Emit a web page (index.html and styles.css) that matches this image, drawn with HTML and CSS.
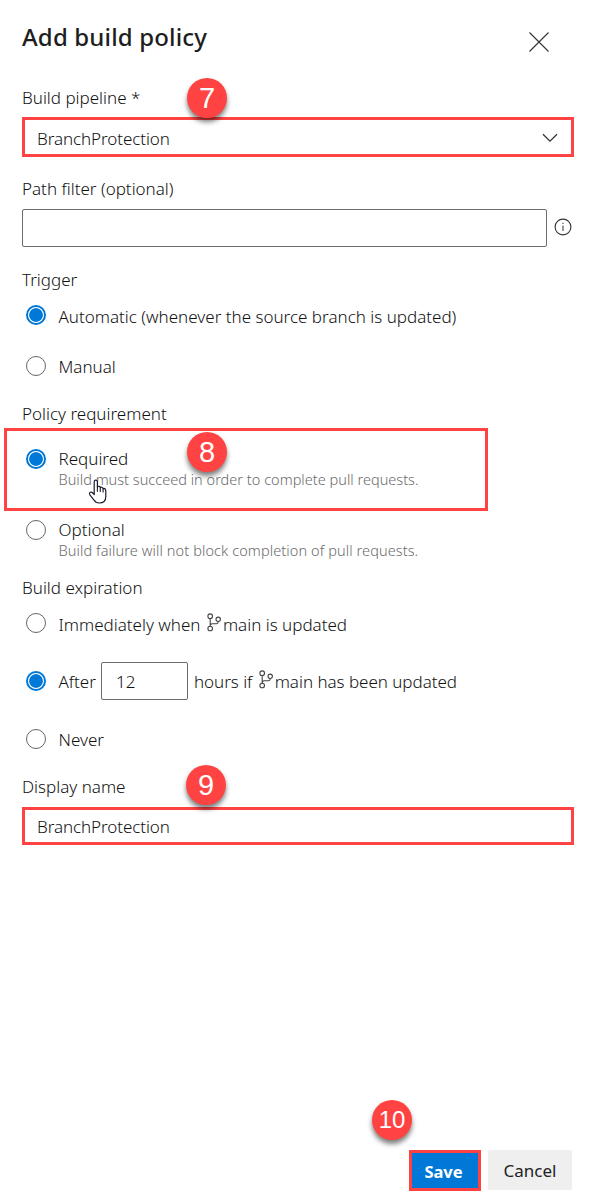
FILE: index.html
```html
<!DOCTYPE html>
<html lang="en">
<head>
  <meta charset="UTF-8" />
  <meta name="viewport" content="width=device-width, initial-scale=1.0" />
  <title>Add build policy</title>
  <link rel="stylesheet" href="styles.css">
</head>
<body>
  <svg width="0" height="0" class="defs">
    <symbol id="branch" viewBox="0 0 14 19">
      <g fill="none" stroke="#444" stroke-width="1.1">
        <circle cx="3.2" cy="3.2" r="2.3" />
        <circle cx="3.2" cy="15.5" r="2.3" />
        <circle cx="11.2" cy="6.3" r="2.2" />
        <path d="M3.2 5.5v7.7M11.2 8.5v.6q0 1.6-1.6 1.6H5.3q-2.1 0-2.1 2.2" />
      </g>
    </symbol>
  </svg>

  <form class="panel">
    <header class="header">
      <h1>Add build policy</h1>
      <button type="button" class="close" aria-label="Close">
        <svg width="22" height="22" viewBox="0 0 22 22"><path d="M1.5 1.5l19 19M20.5 1.5l-19 19" fill="none" stroke="#333" stroke-width="1.1" /></svg>
      </button>
    </header>

    <section class="field pipeline">
      <label class="label">Build pipeline *</label>
      <span class="badge">7</span>
      <div class="dropdown highlight">
        <span>BranchProtection</span>
        <svg width="16" height="10" viewBox="0 0 16 10"><path d="M1 1.2l7 7 7-7" fill="none" stroke="#333" stroke-width="1.3" /></svg>
      </div>
    </section>

    <section class="field path">
      <label class="label" for="path">Path filter (optional)</label>
      <div class="path-row">
        <input type="text" id="path" class="text-input" />
        <svg width="18" height="18" viewBox="0 0 18 18">
          <circle cx="9" cy="9" r="7.9" fill="none" stroke="#333" stroke-width="1.1" />
          <path d="M9 7.6v5.4M9 4.7v1.4" stroke="#555" stroke-width="1.2" />
        </svg>
      </div>
    </section>

    <section class="field trigger">
      <div class="label">Trigger</div>
      <label class="option automatic">
        <input type="radio" name="trigger" checked />
        <span class="text">Automatic (whenever the source branch is updated)</span>
      </label>
      <label class="option manual">
        <input type="radio" name="trigger" />
        <span class="text">Manual</span>
      </label>
    </section>

    <section class="field requirement">
      <div class="label">Policy requirement</div>
      <div class="required-box highlight">
        <label class="option">
          <input type="radio" name="requirement" checked />
          <span class="text">Required<small>Build must succeed in order to complete pull requests.</small></span>
        </label>
        <span class="badge">8</span>
        <svg class="cursor" width="20" height="26" viewBox="0 0 20 26">
          <path d="M6.2 15.5V3.2Q6.2 1.2 7.8 1.2T9.4 3.2V7.9Q9.9 7.1 11 7.3T12.3 8.7Q12.9 8 13.9 8.3T15.1 9.8Q15.7 9.2 16.6 9.6T17.8 11.5V17.5Q17.8 24 11.2 24Q7.6 24 5.8 20.8L1.7 15.6Q1 14 2.3 13.3T4.8 14Z" fill="#fff" stroke="#1b1b2b" stroke-width="1.2" stroke-linejoin="round" />
          <path d="M9.4 7.5v5.2M12.3 8.5v4.6M15.1 9.5v4" fill="none" stroke="#1b1b2b" stroke-width="1.1" />
        </svg>
      </div>
      <label class="option optional">
        <input type="radio" name="requirement" />
        <span class="text">Optional<small class="wide">Build failure will not block completion of pull requests.</small></span>
      </label>
    </section>

    <section class="field expiration">
      <div class="label">Build expiration</div>
      <label class="option immediately">
        <input type="radio" name="expiration" />
        <span class="text">Immediately when <svg class="branch" width="14" height="19"><use href="#branch" /></svg>main is updated</span>
      </label>
      <div class="option after">
        <input type="radio" name="expiration" checked />
        <span class="text">After</span>
        <input type="text" class="text-input hours" value="12" />
        <span class="text">hours if <svg class="branch" width="14" height="19"><use href="#branch" /></svg>main has been updated</span>
      </div>
      <label class="option never">
        <input type="radio" name="expiration" />
        <span class="text">Never</span>
      </label>
    </section>

    <section class="field display-name">
      <label class="label" for="name">Display name</label>
      <span class="badge">9</span>
      <input type="text" id="name" class="name-input highlight" value="BranchProtection" />
    </section>

    <footer class="footer">
      <span class="badge">10</span>
      <button type="button" class="save highlight">Save</button>
      <button type="button" class="cancel">Cancel</button>
    </footer>
  </form>
</body>
</html>
```
FILE: styles.css
```css
* {
  margin: 0;
  padding: 0;
  box-sizing: border-box;
}
body {
  background: #fff;
  color: #111;
  font-family: "Noto Sans", "Open Sans", sans-serif;
  font-size: 17px;
  font-weight: 300;
  line-height: 24px;
}
input, button {
  font: inherit;
  color: inherit;
}
svg {
  display: block;
  flex: none;
}
.defs {
  display: none;
}
.panel {
  display: flex;
  flex-direction: column;
  height: 1204px;
  padding: 20px 18px 13px 22px;
}

/* header */
.header {
  display: flex;
  justify-content: space-between;
  height: 66px;
}
h1 {
  font-size: 24px;
  font-weight: 500;
  line-height: 33px;
  letter-spacing: 0.15px;
  color: #1e1e1e;
}
.close {
  align-self: flex-start;
  margin: 11px 24px 0 0;
  border: none;
  background: none;
}

/* fields */
.field {
  position: relative;
}
.label {
  display: block;
  height: 24px;
}
.highlight {
  border: 3px solid #ff4343;
}
.text-input {
  height: 38px;
  border: 1px solid #6b6b6b;
  border-radius: 2px;
  background: #fff;
  outline: none;
}
.dropdown {
  display: flex;
  align-items: center;
  justify-content: space-between;
  height: 40px;
  margin-top: 7px;
  padding: 4px 13px 0 12px;
  letter-spacing: -0.08px;
}
.dropdown svg {
  margin-top: -3px;
}
.path {
  margin-top: 20px;
}
.path-row {
  display: flex;
  align-items: center;
  gap: 7px;
  margin-top: 8px;
}
.path-row .text-input {
  width: 525px;
}
.path-row svg {
  margin-top: -3px;
}
.trigger {
  margin-top: 21px;
}
.requirement {
  margin-top: 23px;
}
.expiration {
  margin-top: 16px;
}
.display-name {
  margin-top: 23px;
}
.name-input {
  display: block;
  width: 552px;
  height: 38px;
  margin-top: 8px;
  padding: 1px 12px 0;
  background: #fff;
  letter-spacing: -0.08px;
  outline: none;
}

/* radio options */
.option {
  display: flex;
  align-items: flex-start;
  padding-left: 4px;
}
input[type="radio"] {
  flex: none;
  appearance: none;
  width: 20px;
  height: 20px;
  margin-right: 12.5px;
  border: 1px solid #666;
  border-radius: 50%;
  background: #fff;
}
input[type="radio"]:checked {
  border: 2px solid #0078d7;
  background: radial-gradient(circle, #0078d7 6.4px, #fff 7.2px);
}
.text small {
  display: block;
  margin-top: -1px;
  font-size: 14.5px;
  line-height: 19px;
  color: #6a6a6a;
  letter-spacing: 0.02px;
}
.text small.wide {
  letter-spacing: 0.1px;
}
.automatic {
  margin-top: 13px;
}
.manual {
  margin-top: 26px;
}
.manual input, .never input {
  margin-top: 1px;
}
.required-box {
  position: relative;
  width: 484px;
  height: 83px;
  margin: 2px 0 0 -18px;
  padding: 16px 0 0 15px;
}
.required-box input, .optional input {
  margin-top: 2px;
}
.optional {
  margin-top: 7px;
}
.immediately {
  margin-top: 13px;
}
.branch {
  display: inline-block;
  margin: -3px 2px 0 2px;
  vertical-align: -1px;
}
.after {
  align-items: center;
  height: 38px;
  margin-top: 25px;
}
.after .text {
  padding-top: 2px;
}
.hours {
  width: 87px;
  margin: 0 6px 0 5px;
  padding: 0 14px;
}
.after .hours + .text {
  letter-spacing: -0.03px;
}
.never {
  margin-top: 28px;
}

/* numbered callouts */
.badge {
  position: absolute;
  width: 40px;
  height: 40px;
  border-radius: 50%;
  background: #ff4343;
  box-shadow: 0 4px 5px rgba(0, 0, 0, 0.5);
  color: #fff;
  font: 400 29px/40px "Liberation Sans", Arial, sans-serif;
  text-align: center;
}
.pipeline .badge {
  left: 165px;
  top: -8px;
}
.required-box .badge {
  left: 180px;
  top: 1px;
}
.display-name .badge {
  left: 164px;
  top: -10px;
}
.footer .badge {
  left: -37px;
  top: -50px;
  font-size: 24px;
}
.cursor {
  position: absolute;
  left: 81px;
  top: 48px;
}

/* footer */
.footer {
  position: relative;
  display: flex;
  align-items: flex-start;
  align-self: flex-end;
  gap: 7px;
  margin: auto 2px 0 0;
}
.footer button {
  padding-top: 2px;
  font-size: 17px;
}
.footer .save {
  width: 72px;
  height: 41px;
  padding-right: 3px;
  background: #0078d7;
  color: #fff;
  font-size: 16.5px;
  font-weight: 700;
}
.footer .cancel {
  width: 84px;
  height: 40px;
  border: none;
  border-radius: 2px;
  background: #efefef;
  color: #222;
  font-weight: 400;
}
```
